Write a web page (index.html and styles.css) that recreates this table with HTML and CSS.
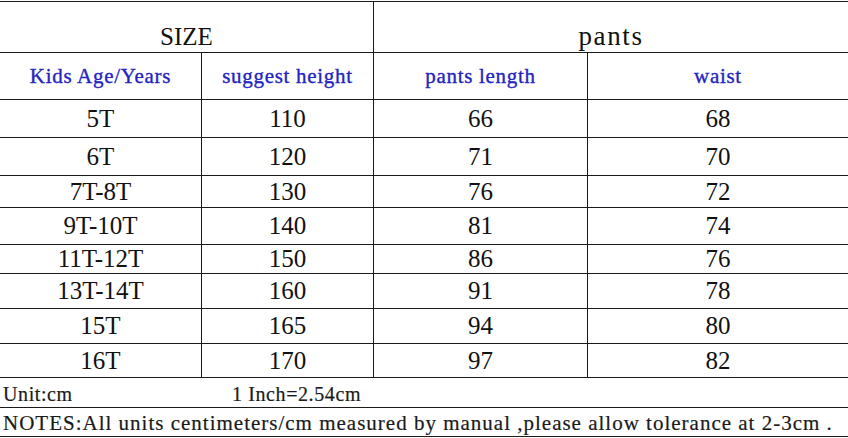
FILE: index.html
```html
<!DOCTYPE html>
<html>
<head>
<meta charset="utf-8">
<link rel="stylesheet" href="styles.css">
</head>
<body>
<div class="chart">
  <div class="cell title span2 sep">SIZE</div>
  <div class="cell title title-wide span2">pants</div>

  <div class="cell label sep">Kids Age/Years</div>
  <div class="cell label sep">suggest height</div>
  <div class="cell label sep">pants length</div>
  <div class="cell label">waist</div>

  <div class="cell num sep">5T</div><div class="cell num sep">110</div><div class="cell num sep">66</div><div class="cell num">68</div>
  <div class="cell num sep">6T</div><div class="cell num sep">120</div><div class="cell num sep">71</div><div class="cell num">70</div>
  <div class="cell num sep">7T-8T</div><div class="cell num sep">130</div><div class="cell num sep">76</div><div class="cell num">72</div>
  <div class="cell num sep">9T-10T</div><div class="cell num sep">140</div><div class="cell num sep">81</div><div class="cell num">74</div>
  <div class="cell num sep">11T-12T</div><div class="cell num sep">150</div><div class="cell num sep">86</div><div class="cell num">76</div>
  <div class="cell num sep">13T-14T</div><div class="cell num sep">160</div><div class="cell num sep">91</div><div class="cell num">78</div>
  <div class="cell num sep">15T</div><div class="cell num sep">165</div><div class="cell num sep">94</div><div class="cell num">80</div>
  <div class="cell num sep">16T</div><div class="cell num sep">170</div><div class="cell num sep">97</div><div class="cell num">82</div>

  <div class="cell note unit-row"><span class="unit-label">Unit:cm</span><span>1 Inch=2.54cm</span></div>
  <div class="cell note notes-row">NOTES:All units centimeters/cm measured by manual ,please allow tolerance at 2-3cm .</div>
</div>
</body>
</html>
```
FILE: styles.css
```css
html, body {
  margin: 0;
  padding: 0;
  background: #fff;
}

.chart {
  margin-top: 1px;
  width: 848px;
  border-top: 1px solid #1a1a1a;
  display: grid;
  grid-template-columns: 202px 172px 214px 260px;
  grid-template-rows: 51px 47px 38px 38px 32px 37px 29px 35px 35px 34px 30px 29px;
}

.cell {
  box-sizing: border-box;
  border-bottom: 1px solid #1a1a1a;
  display: flex;
  align-items: center;
  justify-content: center;
  color: #111;
  white-space: nowrap;
  overflow: hidden;
  font-family: "Liberation Serif", serif;
}

.sep {
  border-right: 1px solid #1a1a1a;
}

.span2 {
  grid-column: span 2;
}

.title {
  align-items: flex-end;
  padding-bottom: 3px;
  font-size: 25px;
  line-height: 25px;
}

.title-wide {
  font-size: 27px;
  line-height: 27px;
  letter-spacing: 1.6px;
  padding-bottom: 2px;
}

.label {
  font-size: 21px;
  letter-spacing: 0.7px;
  color: #2424bf;
  -webkit-text-stroke: 0.35px #2424bf;
  padding-top: 1px;
}

.num {
  font-size: 25px;
  color: #111;
}

.note {
  grid-column: 1 / -1;
  justify-content: flex-start;
  padding-left: 3px;
  color: #1a1a1a;
  align-items: flex-end;
  -webkit-text-stroke: 0.2px #1a1a1a;
}

.unit-row {
  font-size: 20px;
  letter-spacing: 0.6px;
  padding-bottom: 1px;
}

.unit-label {
  width: 229px;
}

.notes-row {
  font-size: 21px;
  letter-spacing: 1px;
  padding-bottom: 0;
}
```
